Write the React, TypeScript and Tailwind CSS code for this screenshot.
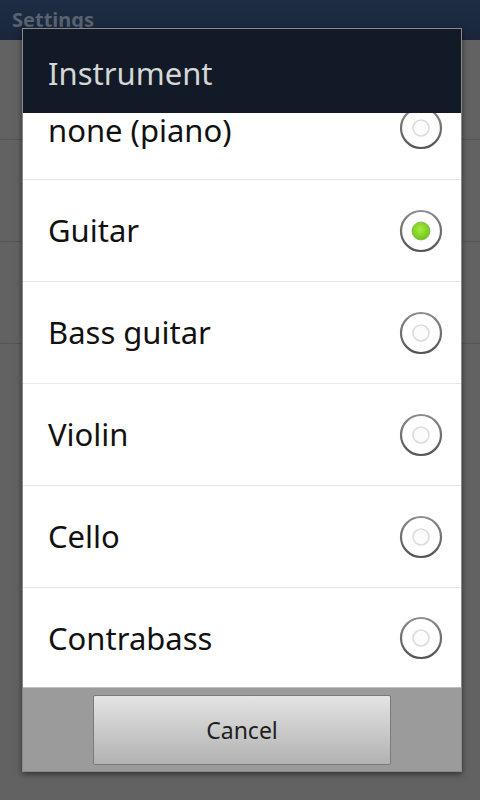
import React from "react";

const items = ["none (piano)", "Guitar", "Bass guitar", "Violin", "Cello", "Contrabass"];

function Radio({ checked }: { checked: boolean }) {
  return (
    <svg width="44" height="44" viewBox="0 0 44 44" className="block shrink-0">
      <defs>
        <linearGradient id="ring" x1="0" y1="0" x2="0" y2="1">
          <stop offset="0" stopColor="#8c8c8c" />
          <stop offset="1" stopColor="#555555" />
        </linearGradient>
        <radialGradient id="green" cx="0.45" cy="0.4" r="0.6">
          <stop offset="0" stopColor="#a6ee3c" />
          <stop offset="1" stopColor="#6fc21c" />
        </radialGradient>
      </defs>
      <circle cx="22" cy="22" r="20" fill="#ffffff" stroke="url(#ring)" strokeWidth="2.2" />
      {checked ? (
        <circle cx="22" cy="22" r="9" fill="url(#green)" stroke="#7fae4a" strokeWidth="0.8" />
      ) : (
        <circle cx="22" cy="22" r="8" fill="#fcfcfc" stroke="#dcdcdc" strokeWidth="1.6" />
      )}
    </svg>
  );
}

function rowClass(i: number) {
  if (i === 0)
    return "h-[67px] shrink-0 border-b border-[#e6e6e6] flex items-start justify-between pl-[25px] pr-[18px] pt-[2px]";
  if (i === items.length - 1)
    return "h-[99px] shrink-0 flex items-center justify-between pl-[25px] pr-[18px] pt-[1px]";
  return "h-[102px] shrink-0 border-b border-[#e6e6e6] flex items-center justify-between pl-[25px] pr-[18px]";
}

export default function App() {
  return (
    <div
      className="relative w-[480px] h-[800px] overflow-hidden bg-[#626262]"
      style={{ fontFamily: '"Noto Sans", "Open Sans", sans-serif' }}
    >
      <div className="h-[40px] bg-gradient-to-b from-[#1e2d44] to-[#1a263a] pl-[12px] flex items-start">
        <span className="text-[20px] font-bold text-[#586272] leading-[40px]">Settings</span>
      </div>
      <div className="flex flex-col">
        <div className="h-[100px] border-b border-[#555555]" />
        <div className="h-[102px] border-b border-[#555555]" />
        <div className="h-[102px] border-b border-[#555555]" />
      </div>

      <div className="absolute left-[22px] top-[28px] w-[440px] border border-[#8a8a8a] shadow-[0_2px_6px_rgba(0,0,0,0.5)] flex flex-col">
        <div className="h-[84px] bg-[#131a27] flex items-center pl-[25px]">
          <span className="text-[31px] text-[#d6d6d6] leading-none pt-[4px]">Instrument</span>
        </div>
        <div className="h-[574px] bg-white flex flex-col">
          {items.map((it, i) => (
            <div key={it} className={rowClass(i)}>
              <span className="text-[31px] text-[#111111] leading-none">{it}</span>
              {i === 0 ? (
                <div className="-mt-[2px] h-[38px] overflow-hidden">
                  <div className="-mt-[7px]">
                    <Radio checked={false} />
                  </div>
                </div>
              ) : (
                <Radio checked={i === 1} />
              )}
            </div>
          ))}
        </div>
        <div className="h-[84px] bg-[#9b9b9b] border-t border-[#bdbdbd] flex justify-center pt-[7px]">
          <div className="w-[298px] h-[70px] rounded-[2px] border border-[#7a7a7a] bg-gradient-to-b from-[#e4e4e4] to-[#b2b2b2] flex items-center justify-center">
            <span className="text-[23px] text-[#1e1e1e]">Cancel</span>
          </div>
        </div>
      </div>
    </div>
  );
}
